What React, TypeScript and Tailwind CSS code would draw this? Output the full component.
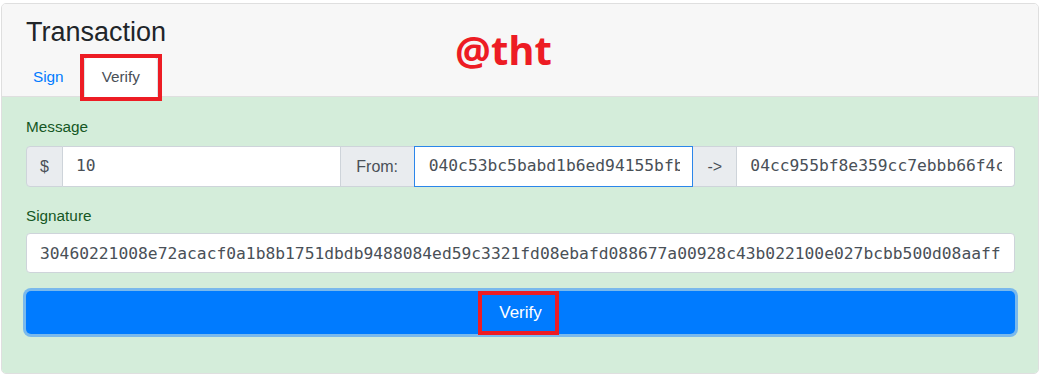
import React from "react";

const mono = "font-['DejaVu_Sans_Mono',monospace] text-[16.3px] text-[#495057]";

const RedBox: React.FC<{ className: string }> = ({ className }) => (
  <span className={`pointer-events-none absolute z-10 border-4 border-[#ed1c24] ${className}`} />
);

const App: React.FC = () => {
  return (
    <div className="relative h-[375px] w-[1043px] overflow-hidden bg-white pl-[1px] pt-[3px] font-['Liberation_Sans',Arial,sans-serif] text-[#212529]">
      <div className="h-[371px] w-[1038px] overflow-visible rounded-[5px] border border-[#dfdfdf]">
        {/* header with tabs */}
        <div className="rounded-t-[4px] border-b border-[#dfdfdf] bg-[#f7f7f7] px-6 pt-[12px]">
          <h3 className="text-[27px] leading-[32px]">Transaction</h3>
          <div className="-mb-px ml-[-10px] mt-[9px] flex h-[40px]">
            <a className="flex items-center pl-[17px] pr-[20px] text-[15.3px] text-[#007bff]">Sign</a>
            <div className="relative flex items-center rounded-t-[4px] border border-[#dee2e6] border-b-white bg-white px-[17px] text-[15.3px] text-[#495057]">
              Verify
              <RedBox className="-bottom-[5px] -left-[5px] -right-[5px] -top-[4px]" />
            </div>
          </div>
        </div>

        {/* body */}
        <div className="h-[276px] rounded-b-[4px] bg-[#d4edda] pb-[40px] pl-6 pr-[23px] pt-[18px]">
          <label className="block text-[15.3px] leading-[23px] text-[#155724]">Message</label>
          <div className="mt-[8px] flex h-[41px]">
            <div className="flex w-[37px] items-center justify-center rounded-l-[4px] border border-[#ced4da] bg-[#e9ecef] text-[16px] text-[#495057]">
              $
            </div>
            <input
              readOnly
              defaultValue="10"
              className={`min-w-0 flex-1 border-y border-r border-[#ced4da] bg-white pl-[13px] pr-[12px] outline-none ${mono}`}
            />
            <div className="flex w-[74px] items-center justify-center border-y border-r border-[#ced4da] bg-[#e9ecef] text-[16px] text-[#495057]">
              From:
            </div>
            <input
              readOnly
              defaultValue="040c53bc5babd1b6ed94155bfb3a8e7c2d91f0e4a6b5c8d7e2f1a0b9c8d7e6f5a4b3c2d1"
              className={`relative z-[1] -ml-px min-w-0 flex-1 border border-[#2b86ea] bg-white pl-[14px] pr-[12px] outline-none ${mono}`}
            />
            <div className="flex w-[44px] items-center justify-center border-y border-r border-[#ced4da] bg-[#e9ecef] text-[16px] text-[#495057]">
              -&gt;
            </div>
            <input
              readOnly
              defaultValue="04cc955bf8e359cc7ebbb66f4c1d2e3f4a5b6c7d8e9f0a1b2c3d4e5f6a7b8c9d0e1f2a3b4"
              className={`min-w-0 flex-1 rounded-r-[4px] border-y border-r border-[#ced4da] bg-white pl-[13px] pr-[12px] outline-none ${mono}`}
            />
          </div>

          <label className="mt-[17px] block text-[15.3px] leading-[23px] text-[#155724]">Signature</label>
          <input
            readOnly
            defaultValue="30460221008e72acacf0a1b8b1751dbdb9488084ed59c3321fd08ebafd088677a00928c43b022100e027bcbb500d08aaff"
            className={`mt-[6px] block h-[40px] w-full rounded-[4px] border border-[#ced4da] bg-white pl-[13px] pr-[12px] outline-none ${mono}`}
          />

          <button className="mt-[18px] flex h-[43px] w-full items-center justify-center rounded-[5px] bg-[#007bff] text-[17px] text-white ring-[3px] ring-[#7ab9ec]">
            <span className="relative">
              Verify
              <RedBox className="-bottom-[10px] -left-[21px] -right-[17px] -top-[9px]" />
            </span>
          </button>
        </div>
      </div>

      <div className="absolute left-[455px] top-[30px] font-['Open_Sans',sans-serif] text-[40px] font-bold leading-[40px] text-[#ed1c24]">
        @tht
      </div>
    </div>
  );
};

export default App;
